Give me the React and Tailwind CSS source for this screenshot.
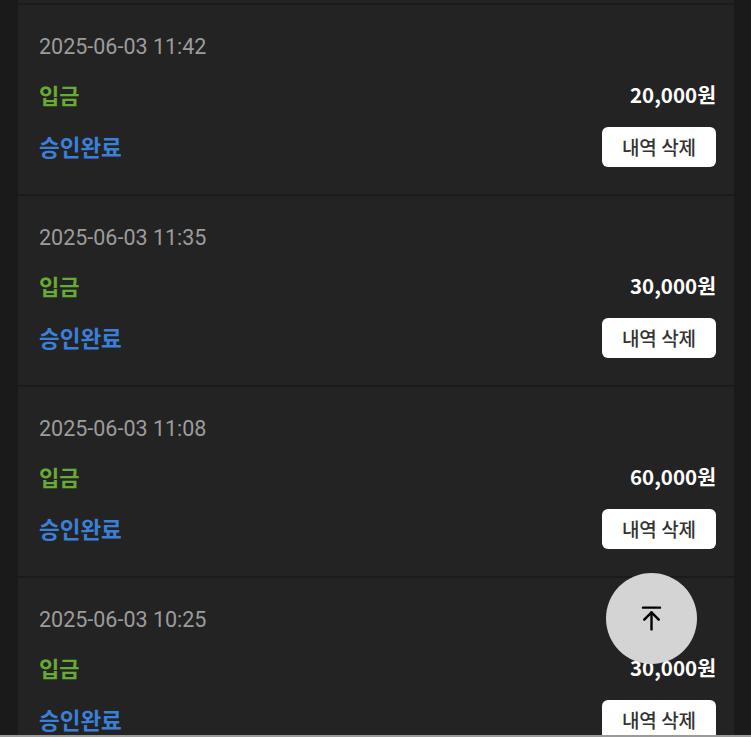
import { ArrowUpToLine } from 'lucide-react'

const items = [
  { date: '2025-06-03 11:42', amount: '20,000원' },
  { date: '2025-06-03 11:35', amount: '30,000원' },
  { date: '2025-06-03 11:08', amount: '60,000원' },
  { date: '2025-06-03 10:25', amount: '30,000원' },
]

function HistoryRow({ date, amount }) {
  return (
    <div className="border-t-2 border-[#1b1b1b] pl-[21px] pr-[18px] pt-[28px] pb-[27px]">
      {/* 날짜 */}
      <div className="h-[28px] flex items-center text-[21.5px] text-[#9c9c9c] font-['Roboto',sans-serif]">
        {date}
      </div>

      {/* 구분 / 금액 */}
      <div className="mt-[19px] h-[28px] flex items-center justify-between">
        <span className="text-[22px] font-semibold text-[#67ab35]">입금</span>
        <span className="text-[20.5px] font-semibold text-white">{amount}</span>
      </div>

      {/* 상태 / 삭제 버튼 */}
      <div className="mt-[19px] h-[40px] flex items-center justify-between">
        <span className="text-[22.5px] font-semibold text-[#3b80d8]">승인완료</span>
        <button className="h-[40px] w-[114px] rounded-md bg-white text-[19px] font-medium text-[#333333]">
          내역 삭제
        </button>
      </div>
    </div>
  )
}

export default function App() {
  return (
    <div className="relative h-[737px] w-[751px] overflow-hidden bg-[#1a1a1a] font-['Noto_Sans_CJK_KR','Noto_Sans',sans-serif]">
      <div className="mx-[18px] h-full bg-[#232323] w-[716px]">
        <div className="h-[3px]" />
        {items.map((item, i) => (
          <HistoryRow key={i} date={item.date} amount={item.amount} />
        ))}
      </div>

      {/* 맨 위로 버튼 */}
      <button className="absolute left-[606px] top-[573px] flex h-[91px] w-[91px] items-center justify-center rounded-full bg-[#d4d4d4] text-black">
        <ArrowUpToLine size={29} strokeWidth={2} />
      </button>

      <div className="absolute bottom-0 left-0 h-[2px] w-full bg-[#9a9a9a]" />
    </div>
  )
}
